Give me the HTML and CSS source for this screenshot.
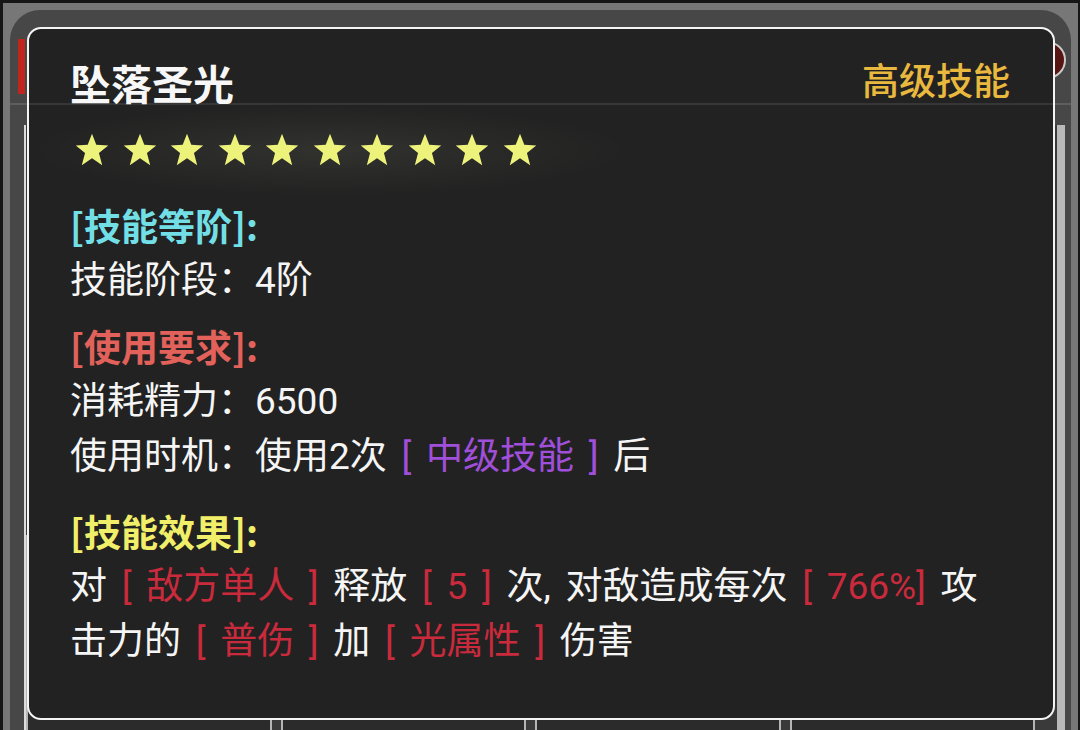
FILE: index.html
```html
<!DOCTYPE html>
<html lang="zh-CN">
<head>
  <meta charset="UTF-8">
  <meta name="viewport" content="width=device-width, initial-scale=1.0">
  <title>技能详情</title>
  <link rel="stylesheet" href="styles.css">
</head>
<body>
  <svg width="0" height="0" class="defs">
    <symbol id="star" viewBox="0 0 24 23">
      <polygon points="12,0.5 14.9,8 23,8.4 16.7,13.5 18.9,21.8 12,17.1 5.1,21.8 7.3,13.5 1,8.4 9.1,8"/>
    </symbol>
  </svg>

  <!-- 背景里的技能面板 -->
  <div class="window">
    <div class="panel">
      <div class="panel-head">
        <span class="red-tab"></span>
        <span class="close-btn"></span>
      </div>
      <div class="panel-body">
        <div class="skill-list"></div>
        <div class="cards">
          <div class="card"></div>
          <div class="card"></div>
          <div class="card"></div>
          <div class="card"></div>
        </div>
      </div>
    </div>
  </div>

  <!-- 技能提示框 -->
  <div class="tooltip">
    <div class="tip-head">
      <h2 class="tip-title">坠落圣光</h2>
      <span class="tip-rank">高级技能</span>
    </div>

    <div class="stars">
      <svg class="star"><use href="#star"/></svg>
      <svg class="star"><use href="#star"/></svg>
      <svg class="star"><use href="#star"/></svg>
      <svg class="star"><use href="#star"/></svg>
      <svg class="star"><use href="#star"/></svg>
      <svg class="star"><use href="#star"/></svg>
      <svg class="star"><use href="#star"/></svg>
      <svg class="star"><use href="#star"/></svg>
      <svg class="star"><use href="#star"/></svg>
      <svg class="star"><use href="#star"/></svg>
    </div>

    <div class="tip-body">
      <div class="section">
        <p class="heading cyan">[技能等阶]:</p>
        <p>技能阶段：4阶</p>
      </div>

      <div class="section">
        <p class="heading salmon">[使用要求]:</p>
        <p>消耗精力：6500</p>
        <p>使用时机：使用2次 <span class="purple">[ 中级技能 ]</span> 后</p>
      </div>

      <div class="section effect">
        <p class="heading yellow">[技能效果]:</p>
        <p>对 <span class="red">[ 敌方单人 ]</span> 释放 <span class="red">[ 5 ]</span> 次, 对敌造成每次 <span class="red">[ 766%]</span> 攻击力的 <span class="red">[ 普伤 ]</span> 加 <span class="red">[ 光属性 ]</span> 伤害</p>
      </div>
    </div>
  </div>
</body>
</html>
```

FILE: styles.css
```css
body {
  margin: 0;
  height: 730px;
  overflow: hidden;
  background-color: #161616;
  font-family: Roboto, "Noto Sans CJK SC", sans-serif;
}

.defs {
  position: absolute;
}

/* ---- 背景面板 ---- */
.window {
  margin: 3px 2px 0 3px;
  padding: 7px 7px 0;
  height: 760px;
  background-color: #777;
}

.panel {
  height: 100%;
  background-color: #474747;
  border-radius: 30px 30px 0 0;
}

.panel-head {
  height: 93px;
  display: flex;
  align-items: center;
  justify-content: space-between;
  border-bottom: 2px solid #5e5e5e;
  padding: 0 5px 0 8px;
}

.red-tab {
  width: 7px;
  height: 55px;
  margin-top: 20px;
  background-color: #c1241c;
}

.close-btn {
  width: 34px;
  height: 34px;
  border-radius: 50%;
  background-color: #571512;
  border: 2px solid #c9c9c9;
  margin-top: 6px;
}

.panel-body {
  margin: 20px 6px 0 14px;
  border-left: 2px solid #dcdcdc;
  border-right: 8px solid #b9b9b9;
  background-color: #3a3a3a;
  height: 640px;
}

.skill-list {
  height: 410px;
}

.cards {
  display: grid;
  grid-template-columns: repeat(4, 1fr);
  gap: 9px;
  padding-right: 22px;
}

.card {
  height: 220px;
  background-color: #2b2b2b;
  border: 2px solid #b5b5b5;
}

/* ---- 提示框 ---- */
.tooltip {
  position: absolute;
  left: 27px;
  top: 27px;
  width: 1028px;
  height: 693px;
  box-sizing: border-box;
  background-color: #222;
  border: 2px solid #f4f4f4;
  border-radius: 14px;
  color: #f5f5f5;
}

.tip-head {
  height: 71px;
  display: flex;
  align-items: flex-end;
  justify-content: space-between;
  padding: 0 43px 3px 41px;
  border-bottom: 2px solid #363636;
}

.tip-title {
  margin: 0;
  font-family: "Noto Sans CJK SC", sans-serif;
  font-size: 41px;
  line-height: 36px;
  font-weight: bold;
  color: #f7f7f7;
}

.tip-rank {
  margin-bottom: 3px;
  font-family: "Noto Sans CJK SC", sans-serif;
  font-size: 37px;
  line-height: 36px;
  font-weight: 500;
  color: #e9b83f;
}

.stars {
  display: flex;
  gap: 11.5px;
  padding: 28px 0 31px 45px;
  background: radial-gradient(ellipse 300px 46px at 300px 45px, rgba(255, 255, 210, 0.07), rgba(255, 255, 210, 0) 100%);
}

.star {
  width: 36px;
  height: 34px;
  fill: #edf27b;
}

.tip-body {
  padding: 0 60px 0 41px;
}

.tip-body p {
  margin: 0;
  font-size: 37px;
  line-height: 55px;
  word-spacing: 5.5px;
  white-space: nowrap;
}

.tip-body .effect p {
  white-space: normal;
}

.section + .section {
  margin-top: 11px;
}

.section.effect {
  margin-top: 20px;
}

.tip-body .heading {
  font-family: "Noto Sans CJK SC", sans-serif;
  font-weight: bold;
}

.cyan {
  color: #72dfe6;
}

.salmon {
  color: #e2625b;
}

.yellow {
  color: #f1ef6a;
}

.purple {
  color: #a04fda;
}

.red {
  color: #c92a3c;
}
```
